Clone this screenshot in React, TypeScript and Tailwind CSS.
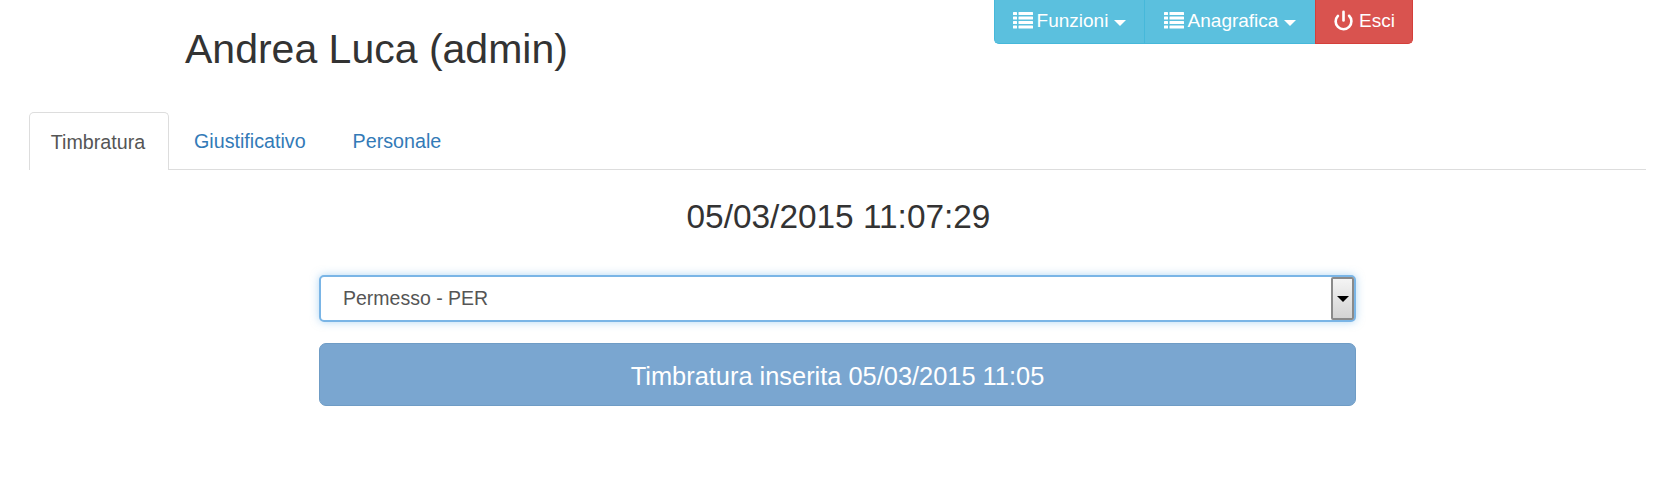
import { Power } from 'lucide-react';

function ListIcon() {
  return (
    <svg width="20" height="17" viewBox="0 0 20 17" fill="currentColor" className="mr-[4px] mb-[2px]">
      <rect x="0" y="0" width="4" height="3" rx="0.5" />
      <rect x="0" y="4.5" width="4" height="3" rx="0.5" />
      <rect x="0" y="9" width="4" height="3" rx="0.5" />
      <rect x="0" y="13.5" width="4" height="3" rx="0.5" />
      <rect x="5.5" y="0" width="14.5" height="3" rx="0.5" />
      <rect x="5.5" y="4.5" width="14.5" height="3" rx="0.5" />
      <rect x="5.5" y="9" width="14.5" height="3" rx="0.5" />
      <rect x="5.5" y="13.5" width="14.5" height="3" rx="0.5" />
    </svg>
  );
}

function Caret() {
  return <span className="ml-[6px] mt-[3px] h-0 w-0 border-x-[6px] border-t-[6px] border-x-transparent border-t-white" />;
}

export default function App() {
  return (
    <div className="h-[484px] w-[1680px] overflow-hidden bg-white font-['Liberation_Sans',sans-serif] text-[#333]">
      {/* Header */}
      <div className="flex h-[112px] items-start">
        <h2 className="ml-[185px] mt-[24px] w-[809px] text-[41px] leading-[50px] font-normal">Andrea Luca (admin)</h2>
        <div className="flex h-[44px] text-[19px] text-white">
          <button className="flex w-[150px] items-center justify-center rounded-bl-[5px] border border-t-0 border-r-0 border-[#46b8da] bg-[#5bc0de]">
            <ListIcon />
            Funzioni
            <Caret />
          </button>
          <button className="flex w-[171px] items-center justify-center border-b border-l border-[#46b8da] bg-[#5bc0de]">
            <ListIcon />
            Anagrafica
            <Caret />
          </button>
          <button className="flex w-[98px] items-center justify-center rounded-br-[5px] border border-t-0 border-[#d43f3a] bg-[#d9534f]">
            <Power size={21} strokeWidth={3} className="mr-[5px] mb-[3px]" />
            Esci
          </button>
        </div>
      </div>

      {/* Tabs */}
      <div className="ml-[29px] flex h-[58px] w-[1617px] border-b-[1.5px] border-[#ddd] text-[19.7px]">
        <div className="mb-[-2px] flex h-[58px] w-[140px] items-center justify-center rounded-t-[5px] border-[1.5px] border-b-0 border-[#ddd] bg-white pt-[3px] pr-[2px] text-[#555]">
          Timbratura
        </div>
        <a className="flex items-center pt-[3px] pl-[25px] text-[#337ab7]">Giustificativo</a>
        <a className="flex items-center pt-[3px] pl-[47px] text-[#337ab7]">Personale</a>
      </div>

      {/* Content */}
      <div className="ml-[319px] w-[1037px]">
        <div className="mt-[25px] pl-[2px] text-center text-[33.4px] leading-[44px]">05/03/2015 11:07:29</div>
        <div className="mt-[36px] flex h-[47px] items-center justify-between rounded-[5px] border-2 border-[#7ab5e6] bg-white pl-[22px] pr-0 text-[19.5px] text-[#555] shadow-[0_0_9px_rgba(102,175,233,0.5)]">
          Permesso - PER
          <span className="flex h-[43px] w-[23px] items-center justify-center rounded-[2px] border-2 border-[#8a8a8a] bg-gradient-to-b from-[#f4f4f4] to-[#d4d4d4]">
            <span className="h-0 w-0 border-x-[6px] border-t-[6px] border-x-transparent border-t-black" />
          </span>
        </div>
        <button className="mt-[21px] h-[63px] w-full rounded-[7px] border border-[#6f9cc5] bg-[#7aa6d0] pt-[3px] text-[25.4px] text-white">
          Timbratura inserita 05/03/2015 11:05
        </button>
      </div>
    </div>
  );
}
